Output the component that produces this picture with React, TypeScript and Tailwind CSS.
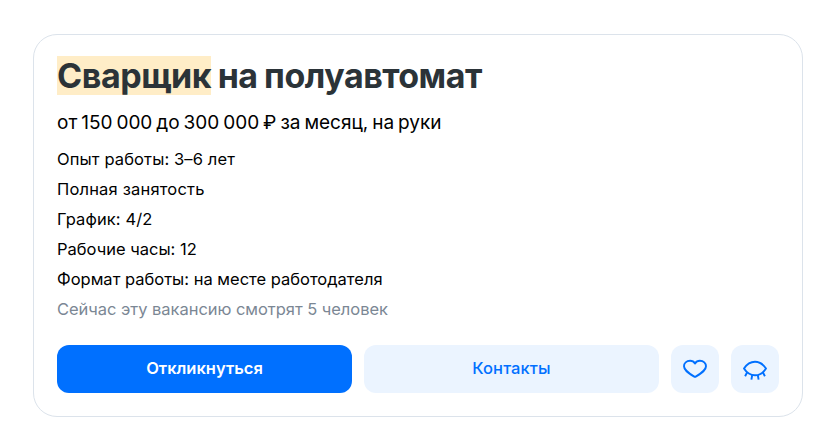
const details = [
  { text: 'Опыт работы: 3–6 лет', tracking: 'tracking-[0.12px]' },
  { text: 'Полная занятость', tracking: 'tracking-[0.18px]' },
  { text: 'График: 4/2', tracking: 'tracking-[0.1px]' },
  { text: 'Рабочие часы: 12', tracking: 'tracking-[0px]' },
  { text: 'Формат работы: на месте работодателя', tracking: 'tracking-[0px]' },
];

function HeartIcon() {
  return (
    <svg width="24" height="24" viewBox="0 0 24 24" fill="none" stroke="currentColor" strokeWidth="1.9" strokeLinejoin="round">
      <path d="M12 6.500C10.900 4.700 9.300 3.800 7.100 3.800C3.500 3.800 1 6.200 1 9.300C1 13 4.500 15.400 10.900 19.400Q12 20.100 13.100 19.400C19.500 15.400 23 13 23 9.300C23 6.200 20.500 3.800 16.900 3.800C14.700 3.800 13.100 4.700 12 6.500Z" />
    </svg>
  );
}

function EyeIcon() {
  return (
    <svg width="24" height="24" viewBox="0 0 24 24" fill="none" stroke="currentColor" strokeWidth="1.9" strokeLinejoin="round">
      <path d="M1 11.500C3.800 7.200 7.300 4.700 12 4.700S20.200 7.200 23 11.500C20.200 15.900 16.700 18.300 12 18.300S3.800 15.900 1 11.500Z" />
      <path d="M4.200 15.200L2.100 19.200M9.200 18L8.400 22.600M14.800 18L15.600 22.600M19.800 15.200L21.900 19.200" />
    </svg>
  );
}

export default function App() {
  return (
    <main className="h-[439px] w-[820px] overflow-hidden bg-white pl-[33px] pt-[34px] font-['Inter','Liberation_Sans',sans-serif] text-black">
      <section className="h-[383px] w-[770px] rounded-[24px] border border-[#dce3eb] px-[23px] pt-[21px] whitespace-nowrap">
        <h1 className="h-[39px] text-[34px] font-bold leading-[39px] tracking-[-0.5px] text-[#2b3338] [word-spacing:-1px]">
          <span className="inline-block h-[39px] bg-[#ffedc7] tracking-[-0.43px]">Сварщик</span> на полуавтомат
        </h1>
        <p className="mt-[13px] text-[19px] leading-[29px] [word-spacing:-1.4px]">от 150 000 до 300 000 ₽ за месяц, на руки</p>
        <div className="mt-[7px] text-[16.5px] leading-[30px]">
          {details.map((d) => (
            <p key={d.text}><span className={d.tracking}>{d.text}</span></p>
          ))}
          <p className="tracking-[-0.04px] text-[#7b8794]">Сейчас эту вакансию смотрят 5 человек</p>
        </div>
        <div className="mt-[21px] flex gap-3 text-[16.5px]">
          <button className="h-12 w-[295px] rounded-xl bg-[#0070ff] pb-0.5 font-semibold text-white">Откликнуться</button>
          <button className="h-12 w-[295px] rounded-xl bg-[#ebf4ff] pb-0.5 font-medium tracking-[0.1px] text-[#0070ff]">Контакты</button>
          <button aria-label="В избранное" className="flex size-12 items-center justify-center rounded-xl bg-[#ebf4ff] text-[#0070ff]"><HeartIcon /></button>
          <button aria-label="Скрыть вакансию" className="flex size-12 items-center justify-center rounded-xl bg-[#ebf4ff] text-[#0070ff]"><EyeIcon /></button>
        </div>
      </section>
    </main>
  );
}
